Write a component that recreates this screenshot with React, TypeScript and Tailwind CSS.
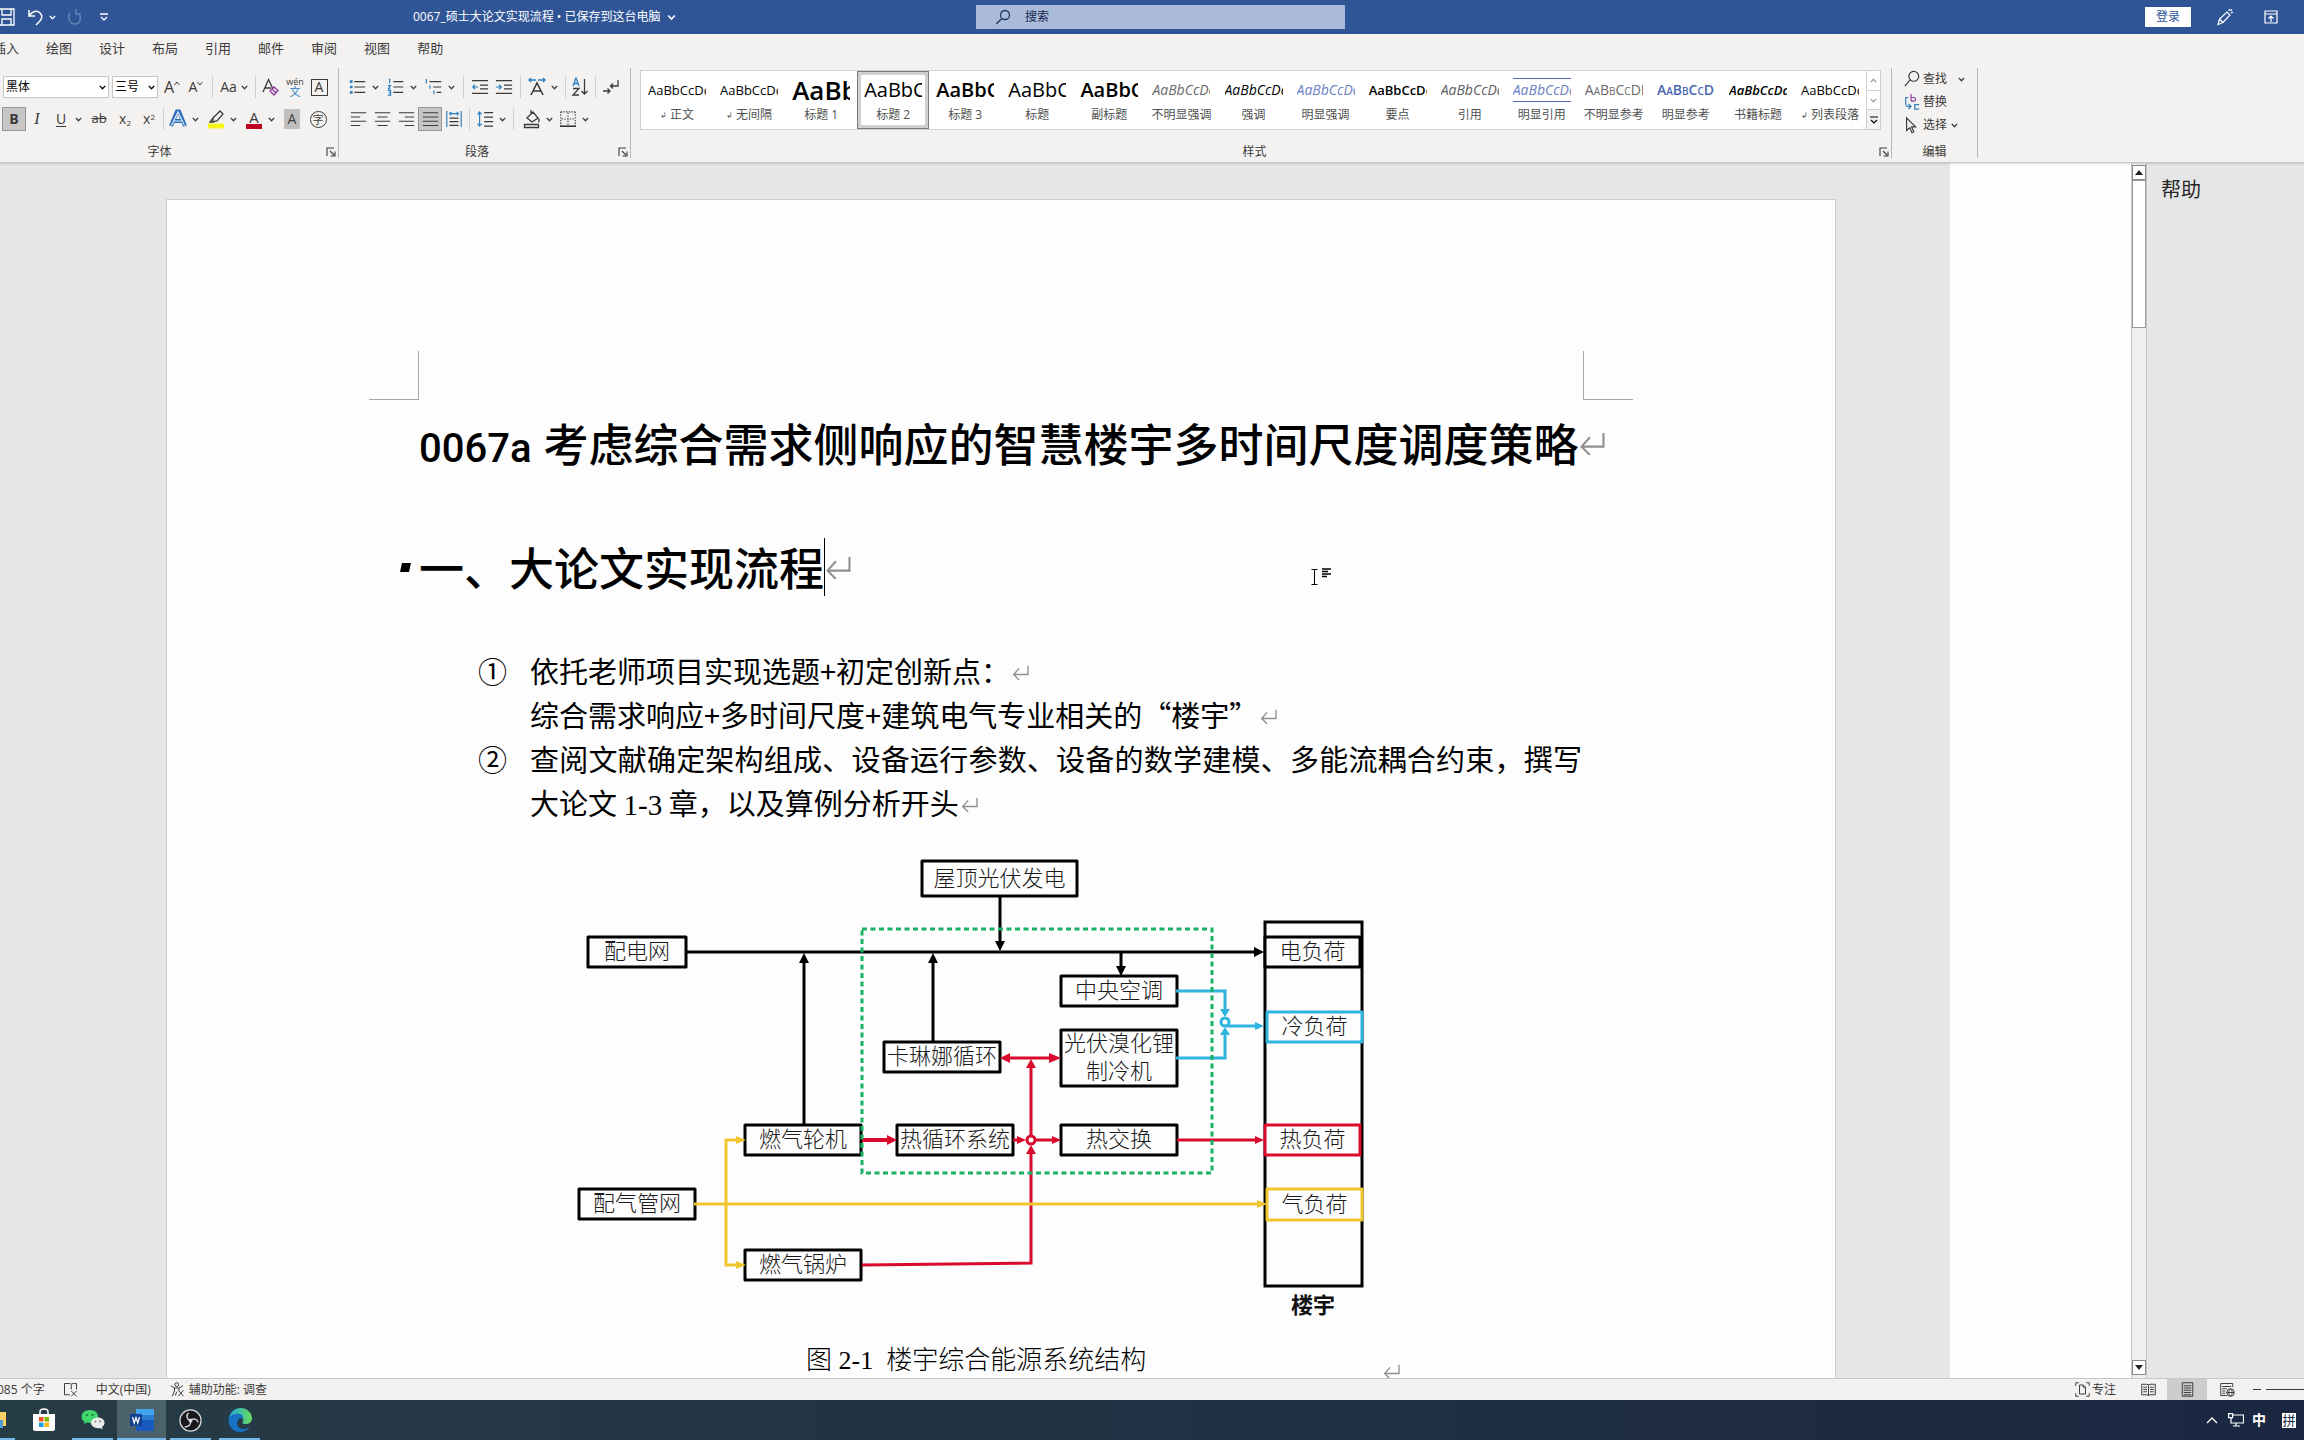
import React, { ReactNode } from "react";

const UI_FONT = "font-['Open_Sans','Noto_Sans_CJK_SC',sans-serif]";

/* ---------- shared pieces ---------- */

function Chevron({ className = "" }: { className?: string }) {
  return (
    <svg viewBox="0 0 10 10" className={"size-[9px] shrink-0 " + className} fill="none" stroke="currentColor" strokeWidth="1.5">
      <path d="M2 3.2 5 6.4 8 3.2" />
    </svg>
  );
}

function Icon({ children, box = "0 0 20 20", className = "size-5" }: { children: ReactNode; box?: string; className?: string }) {
  return (
    <svg viewBox={box} className={"shrink-0 " + className} fill="none" stroke="#3b3a39" strokeWidth="1.3">
      {children}
    </svg>
  );
}

function Tool({ label, children, active = false, wide = false }: { label: string; children: ReactNode; active?: boolean; wide?: boolean }) {
  return (
    <button
      type="button"
      aria-label={label}
      className={
        "flex h-[22px] shrink-0 items-center justify-center " +
        (wide ? "w-7 " : active ? "w-[22px] " : "w-6 ") +
        (active ? "bg-[#c8c6c4] outline outline-1 outline-[#979593]" : "")
      }
    >
      {children}
    </button>
  );
}

function SplitTool({ label, children }: { label: string; children: ReactNode }) {
  return (
    <button type="button" aria-label={label} className="flex h-[22px] w-9 shrink-0 items-center text-[#3b3a39]">
      <span className="flex w-6 items-center justify-center">{children}</span>
      <Chevron className="ml-px" />
    </button>
  );
}

function Sep({ className = "mx-1" }: { className?: string }) {
  return <span className={"h-[22px] w-px shrink-0 bg-[#d2d0ce] " + className} />;
}

function Launcher() {
  return (
    <button type="button" aria-label="更多选项" className="mr-[2px] size-[10px]">
      <svg viewBox="0 0 10 10" fill="none" stroke="#3b3a39" strokeWidth="1.1" className="size-[10px]">
        <path d="M1 9V1h7M4 4l4 4M9 4.500V9H4.500" />
      </svg>
    </button>
  );
}

function GroupLabel({ text, launcher = true }: { text: string; launcher?: boolean }) {
  return (
    <div className="flex h-[14px] items-center text-xs text-[#3b3a39]">
      <span className={"flex-1 text-center " + (launcher ? "pr-[10px]" : "")}>{text}</span>
      {launcher && <Launcher />}
    </div>
  );
}

function Picker({ label, value, options, className }: { label: string; value: string; options: string[]; className: string }) {
  return (
    <label className={"relative flex h-[22px] shrink-0 items-center border border-[#c8c6c4] bg-white " + className}>
      <span className="sr-only">{label}</span>
      <select defaultValue={value} className="w-full appearance-none bg-transparent pl-[2px] text-xs text-black">
        {options.map((o) => (
          <option key={o}>{o}</option>
        ))}
      </select>
      <Chevron className="pointer-events-none absolute right-px" />
    </label>
  );
}

function Mark({ big = false }: { big?: boolean }) {
  return (
    <svg
      viewBox="0 0 24 22"
      className={"inline-block shrink-0 self-center align-[3px] " + (big ? "h-[23px] w-[26px]" : "ml-[2px] h-[15px] w-[17px]")}
      fill="none"
      stroke="#8f8f8f"
      strokeWidth="2"
    >
      <path d="M23 1v13H2M10 5 2 14l8 8" />
    </svg>
  );
}

/* ---------- title bar ---------- */

function TitleBar() {
  return (
    <header className="relative flex h-[34px] shrink-0 items-center bg-[#2f5597] text-xs text-white">
      <button type="button" aria-label="保存" className="-ml-[3px]">
        <svg viewBox="0 0 18 18" className="size-[18px]" fill="none" stroke="#fff" strokeWidth="1.3">
          <path d="M1 1h16v16H3l-2-2zM5 1v6h9V1M5 17v-6h9v6" />
        </svg>
      </button>
      <button type="button" aria-label="撤消" className="ml-3 flex items-center">
        <svg viewBox="0 0 17 18" className="h-[18px] w-[17px]" fill="none" stroke="#fff" strokeWidth="1.5">
          <path d="M2 2v6h6M2 8c3-5 8-6 11-3s2 6-1 9l-3 3" />
        </svg>
        <Chevron className="ml-1" />
      </button>
      <button type="button" aria-label="恢复" className="ml-[9px] opacity-25">
        <svg viewBox="0 0 17 18" className="h-[18px] w-[17px]" fill="none" stroke="#fff" strokeWidth="1.5">
          <path d="M10 1v5h5M13 6c3 4 1 10-4 10S1 10 4 5" />
        </svg>
      </button>
      <button type="button" aria-label="自定义快速访问工具栏" className="ml-4">
        <svg viewBox="0 0 10 10" className="size-[10px]" fill="none" stroke="#fff" strokeWidth="1.3">
          <path d="M1 2h8M2 5l3 3 3-3" />
        </svg>
      </button>
      <button type="button" className="ml-[304px] flex items-center whitespace-nowrap">
        0067_硕士大论文实现流程 • 已保存到这台电脑
        <Chevron className="ml-[6px] size-[11px]" />
      </button>
      <label className="absolute left-[42.360%] top-[5px] flex h-6 w-[16%] items-center bg-[#a9bbd9] pl-[19px]">
        <svg viewBox="0 0 16 16" className="size-4" fill="none" stroke="#1f3864" strokeWidth="1.3">
          <circle cx="10" cy="6" r="4.500" />
          <path d="m6.800 9.500-5.500 5.500" />
        </svg>
        <input aria-label="搜索" placeholder="搜索" className="ml-[14px] min-w-0 flex-1 bg-transparent text-xs outline-none placeholder:text-[#16294d]" />
      </label>
      <div className="ml-auto flex items-center pr-[26px]">
        <button type="button" className="h-5 w-[46px] bg-white text-xs text-[#2f5597]">
          登录
        </button>
        <button type="button" aria-label="墨迹" className="ml-[25px]">
          <svg viewBox="0 0 18 18" className="size-[18px]" fill="none" stroke="#fff" strokeWidth="1.200">
            <path d="M2 16.500 3.500 11 11 4l3 3-7 7.500zM3.500 11l3.500 3.500M12.500 3 14 1M15 5l2-1M14.500 3l1.500-1.500" />
          </svg>
        </button>
        <button type="button" aria-label="功能区显示选项" className="ml-[30px]">
          <svg viewBox="0 0 14 14" className="size-[14px]" fill="none" stroke="#fff" strokeWidth="1.200">
            <path d="M1 1h12v12H1zM1 4h12M7 12V6M4.500 8.500 7 6l2.500 2.500" />
          </svg>
        </button>
      </div>
    </header>
  );
}

/* ---------- ribbon ---------- */

const TABS = ["插入", "绘图", "设计", "布局", "引用", "邮件", "审阅", "视图", "帮助"];

function TabRow() {
  return (
    <nav className="-ml-[7px] flex h-[30px] items-center gap-[27px] text-[13px] text-[#3b3a39]">
      {TABS.map((t) => (
        <button key={t} type="button" className="whitespace-nowrap">
          {t}
        </button>
      ))}
    </nav>
  );
}

function FontGroup() {
  return (
    <section className="flex w-[339px] shrink-0 flex-col border-r border-[#b8b6b4] pl-[3px] pt-2">
      <div className="flex items-center">
        <Picker label="字体" value="黑体" options={["黑体", "宋体"]} className="w-[106px]" />
        <Picker label="字号" value="三号" options={["三号", "四号"]} className="ml-[3px] mr-[2px] w-[46px]" />
        <Tool label="增大字号">
          <span className="text-base text-[#3b3a39]">A</span>
          <svg viewBox="0 0 6 5" className="mb-2 h-[5px] w-[6px]" fill="none" stroke="#3b3a39"><path d="M.5 4 3 1l2.500 3" /></svg>
        </Tool>
        <Tool label="减小字号">
          <span className="text-sm text-[#3b3a39]">A</span>
          <svg viewBox="0 0 6 5" className="mb-2 h-[5px] w-[6px]" fill="none" stroke="#3b3a39"><path d="M.5 1 3 4l2.500-3" /></svg>
        </Tool>
        <Sep />
        <button type="button" aria-label="更改大小写" className="flex h-[22px] w-[35px] items-center justify-center gap-[3px] text-sm text-[#3b3a39]">
          Aa
          <Chevron />
        </button>
        <Sep className="mx-[3px]" />
        <Tool label="清除所有格式">
          <Icon>
            <path d="M2 15 7.500 2.500 12 12M4 11h6" />
            <path d="m9 14 4-4 4 3.500-4 4.500zM11 12l4 4" stroke="#8a3a9a" />
          </Icon>
        </Tool>
        <Tool label="拼音指南">
          <span className="flex flex-col items-center text-[9px] leading-[9px] text-[#3b3a39]">
            wén<span className="text-[11px] leading-[11px] text-[#2b7fc0]">文</span>
          </span>
        </Tool>
        <Tool label="字符边框">
          <span className="flex size-[17px] items-center justify-center border border-[#3b3a39] text-sm leading-none text-[#3b3a39]">A</span>
        </Tool>
      </div>
      <div className="mt-[10px] flex items-center text-[#3b3a39]">
        <Tool label="加粗" active>
          <b className="text-sm">B</b>
        </Tool>
        <Tool label="倾斜">
          <i className="font-['Liberation_Serif',serif] text-base">I</i>
        </Tool>
        <SplitTool label="下划线">
          <span className="text-sm underline underline-offset-2">U</span>
        </SplitTool>
        <Tool label="删除线" wide>
          <s className="text-[13px]">ab</s>
        </Tool>
        <Tool label="下标">
          <span className="text-sm">
            x<sub className="text-[8px]">2</sub>
          </span>
        </Tool>
        <Tool label="上标">
          <span className="text-sm">
            x<sup className="text-[8px]">2</sup>
          </span>
        </Tool>
        <Sep className="mx-[2px]" />
        <div className="flex items-center gap-[2px]">
          <SplitTool label="文本效果">
            <Icon>
              <path d="M3 17 9 2.500h2L17 17M6 12h8" stroke="#2b6cb8" strokeWidth="4" />
              <path d="M3.500 16.500 10 3l6.500 13.500M6 12h8" stroke="#dcebfa" strokeWidth="1.200" />
            </Icon>
          </SplitTool>
          <SplitTool label="突出显示">
            <Icon>
              <path d="m7 9 7-7 3 3-6 7-4 1zM7 9v4l-3 0z" />
              <path d="M2 17h16" stroke="#f7f71c" strokeWidth="5" />
            </Icon>
          </SplitTool>
          <SplitTool label="字体颜色">
            <span className="flex flex-col items-center text-[15px] leading-[14px]">
              A<span className="h-[5px] w-4 bg-[#c00020]" />
            </span>
          </SplitTool>
          <Tool label="字符底纹">
            <span className="flex h-5 w-4 items-center justify-center bg-[#c0bfbe] text-sm leading-none">A</span>
          </Tool>
          <Tool label="带圈字符">
            <span className="flex size-[17px] items-center justify-center rounded-full border border-[#3b3a39] text-[11px] leading-none">字</span>
          </Tool>
        </div>
      </div>
      <div className="mt-[15px]">
        <GroupLabel text="字体" />
      </div>
    </section>
  );
}

function ParagraphGroup() {
  return (
    <section className="flex w-[292px] shrink-0 flex-col border-r border-[#b8b6b4] pl-[7px] pt-2">
      <div className="flex items-center">
        <div className="flex gap-[2px]">
          <SplitTool label="项目符号">
            <Icon className="size-[18px]">
              <path d="M6 4h12M6 10h12M6 16h12" />
              <path d="M1 4h3M1 10h3M1 16h3" stroke="#2b7fc0" strokeWidth="3" />
            </Icon>
          </SplitTool>
          <SplitTool label="编号">
            <Icon className="size-[18px]">
              <path d="M7 4h11M7 10h11M7 16h11" />
              <path d="M2 1.500h1V6M1 8.500h3L1.500 12H4M1 14h3v5H1M2 16.500h2" stroke="#2b7fc0" />
            </Icon>
          </SplitTool>
          <SplitTool label="多级列表">
            <Icon className="size-[18px]">
              <path d="M5 4h13M9 10h9M13 16h5" />
              <path d="M1.500 1v5M5.500 8v4M10 14v4" stroke="#2b7fc0" />
            </Icon>
          </SplitTool>
        </div>
        <Sep className="ml-[5px] mr-1" />
        <Tool label="减少缩进量">
          <Icon className="size-[18px]">
            <path d="M1 3h18M10 8h9M10 12h9M1 17h18" />
            <path d="M8 10H2M4.500 7.500 2 10l2.500 2.500" stroke="#2b7fc0" />
          </Icon>
        </Tool>
        <Tool label="增加缩进量">
          <Icon className="size-[18px]">
            <path d="M1 3h18M10 8h9M10 12h9M1 17h18" />
            <path d="M1 10h6M4.500 7.500 7 10l-2.500 2.500" stroke="#2b7fc0" />
          </Icon>
        </Tool>
        <Sep />
        <SplitTool label="中文版式">
          <Icon>
            <path d="M4 18 10 6l6 12M6 14h8" strokeWidth="1.600" />
            <path d="M9 3H2M4 1 2 3l2 2M11 3h7M16 1l2 2-2 2" stroke="#2b7fc0" />
          </Icon>
        </SplitTool>
        <Sep className="ml-1 mr-[2px]" />
        <Tool label="排序">
          <Icon>
            <path d="M3 9 6 1l3 8M4 6.500h4" stroke="#2b7fc0" />
            <path d="M3 11.500h6L3 18h6M14.500 2v15M11.500 14l3 3 3-3" />
          </Icon>
        </Tool>
        <Sep className="mx-[3px]" />
        <Tool label="显示编辑标记">
          <Icon>
            <path d="M17 3v6h-7M12 6.500 9.500 9l2.500 2.500M2 14h7M6.500 11.500 9 14l-2.500 2.500" />
          </Icon>
        </Tool>
      </div>
      <div className="mt-[10px] flex items-center">
        <Tool label="左对齐">
          <Icon className="size-[17px]"><path d="M1 2h18M1 7h11M1 12h18M1 17h11" /></Icon>
        </Tool>
        <Tool label="居中">
          <Icon className="size-[17px]"><path d="M1 2h18M4 7h12M1 12h18M4 17h12" /></Icon>
        </Tool>
        <Tool label="右对齐">
          <Icon className="size-[17px]"><path d="M1 2h18M8 7h11M1 12h18M8 17h11" /></Icon>
        </Tool>
        <span className="mx-px">
          <Tool label="两端对齐" active>
            <Icon className="size-[17px]"><path d="M1 2h18M1 7h18M1 12h18M1 17h18" /></Icon>
          </Tool>
        </span>
        <Tool label="分散对齐">
          <Icon className="size-[18px]">
            <path d="M5 9h10M5 13h10M5 17h10" />
            <path d="M2 1v18M18 1v18M5 4h10M7 2 5 4l2 2M13 2l2 2-2 2" stroke="#2b7fc0" />
          </Icon>
        </Tool>
        <Sep className="mx-[3px]" />
        <SplitTool label="行距">
          <Icon className="size-[18px]">
            <path d="M9 3h10M9 8h10M9 13h10M9 18h10" />
            <path d="M4 2v16M1.500 5 4 2l2.500 3M1.500 15 4 18l2.500-3" stroke="#2b7fc0" />
          </Icon>
        </SplitTool>
        <Sep className="ml-1 mr-[6px]" />
        <SplitTool label="底纹">
          <Icon>
            <path d="m5 9 6-6 5 6-6 4zM9 5V1M16 9c2 2 1 4 0 4" />
            <path d="M2.500 15.500h14v3h-14z" />
          </Icon>
        </SplitTool>
        <SplitTool label="边框">
          <Icon className="size-[18px]">
            <path d="M2 2h16M2 2v16M18 2v16M10 3v14M3 10h14" strokeDasharray="1.500 1.500" />
            <path d="M1 18h18" strokeWidth="1.800" />
          </Icon>
        </SplitTool>
      </div>
      <div className="mt-[15px]">
        <GroupLabel text="段落" />
      </div>
    </section>
  );
}

type StyleItem = { name: string; look: string; sample?: string; mark?: boolean; selected?: boolean };

const STYLES: StyleItem[] = [
  { name: "正文", look: "text-[13px] text-black", mark: true },
  { name: "无间隔", look: "text-[13px] text-black", mark: true },
  { name: "标题 1", look: "text-[26px] font-semibold text-black" },
  { name: "标题 2", look: "text-[20px] text-black", selected: true },
  { name: "标题 3", look: "text-[20px] font-semibold text-black" },
  { name: "标题", look: "text-[20px] text-black" },
  { name: "副标题", look: "text-[20px] font-semibold text-black" },
  { name: "不明显强调", look: "text-sm italic text-[#6a6a6a]" },
  { name: "强调", look: "text-sm italic text-black" },
  { name: "明显强调", look: "text-sm italic text-[#6b82c4]" },
  { name: "要点", look: "text-[13px] font-semibold text-black" },
  { name: "引用", look: "text-sm italic text-[#606060]" },
  { name: "明显引用", look: "text-sm italic text-[#6b82c4] border-y border-[#4f6bb5]" },
  { name: "不明显参考", look: "text-sm text-[#6a6a6a]", sample: "smallcaps" },
  { name: "明显参考", look: "text-sm font-semibold text-[#4a68b0]", sample: "smallcaps" },
  { name: "书籍标题", look: "text-[13px] font-semibold italic text-black" },
  { name: "列表段落", look: "text-[13px] text-black", mark: true },
];

function Sample({ item }: { item: StyleItem }) {
  if (item.sample !== "smallcaps") return <>AaBbCcDd</>;
  return (
    <>
      A<span className="text-[10px]">A</span>B<span className="text-[10px]">B</span>C<span className="text-[10px]">C</span>DD
    </>
  );
}

function StylesGroup() {
  return (
    <section className="flex min-w-0 flex-1 flex-col border-r border-[#b8b6b4] pl-[9px] pt-[2px]">
      <div className="mr-[10px] flex h-[60px] border border-[#d2d0ce] bg-white">
        <div className="flex flex-1 justify-between overflow-hidden">
          {STYLES.map((s) => (
            <button
              key={s.name}
              type="button"
              className={
                "flex h-[58px] w-[72px] shrink-0 flex-col items-center " +
                (s.selected ? "bg-white shadow-[inset_0_0_0_1px_#7a7977,inset_0_0_0_4px_#d2d0ce]" : "")
              }
            >
              <span className="flex h-[38px] w-[58px] items-center overflow-hidden">
                <span className={"whitespace-nowrap leading-[22px] " + s.look}>
                  <Sample item={s} />
                </span>
              </span>
              <span className="flex h-3 items-center whitespace-nowrap text-xs leading-3 text-[#505050]">
                {s.mark && <span className="mr-[3px] text-[8px]">↲</span>}
                {s.name}
              </span>
            </button>
          ))}
        </div>
        <div className="flex w-[14px] shrink-0 flex-col border-l border-[#d2d0ce] text-[#a19f9d]">
          <button type="button" aria-label="上一行" className="flex flex-1 items-center justify-center border-b border-[#d2d0ce]">
            <Chevron className="rotate-180" />
          </button>
          <button type="button" aria-label="下一行" className="flex flex-1 items-center justify-center border-b border-[#d2d0ce]">
            <Chevron />
          </button>
          <button type="button" aria-label="其他样式" className="flex flex-1 items-center justify-center bg-[#f3f2f1] text-black">
            <svg viewBox="0 0 10 10" className="size-[10px]" fill="none" stroke="currentColor" strokeWidth="1.2">
              <path d="M1 2h8M2 5l3 3 3-3" />
            </svg>
          </button>
        </div>
      </div>
      <div className="mt-[15px]">
        <GroupLabel text="样式" />
      </div>
    </section>
  );
}

function EditGroup() {
  return (
    <section className="flex w-[86px] shrink-0 flex-col border-r border-[#b8b6b4] text-xs text-[#3b3a39]">
      <div className="flex flex-col gap-px pl-[11px]">
        <button type="button" className="flex h-[22px] items-center gap-[2px]">
          <Icon className="size-[18px]"><circle cx="12" cy="7" r="5.500" /><path d="m8 11-6 7" /></Icon>
          查找
          <Chevron className="ml-2" />
        </button>
        <button type="button" className="flex h-[22px] items-center gap-[2px]">
          <Icon className="size-[18px]">
            <path d="M9 1v8M9 5h3a2 2 0 0 1 0 4H9" stroke="#8a3a9a" />
            <path d="M6 5H3v7c0 3 2 3 5 3M6 12l3 3-3 3M18 13h-5v5h5" stroke="#2b7fc0" />
          </Icon>
          替换
        </button>
        <button type="button" className="flex h-[22px] items-center gap-[2px]">
          <Icon className="size-[18px]"><path d="M4 2v14l3.500-3 2.500 5.500 2-1-2.500-5.500H14z" /></Icon>
          选择
          <Chevron className="ml-px" />
        </button>
      </div>
      <div className="mt-[9px]">
        <GroupLabel text="编辑" launcher={false} />
      </div>
    </section>
  );
}

function Ribbon() {
  return (
    <div className="z-10 shrink-0 border-b border-[#c8c6c4] bg-[#f3f2f1] shadow-sm">
      <TabRow />
      <div className="flex h-[98px] pb-1 pr-[326px] pt-1">
        <FontGroup />
        <ParagraphGroup />
        <StylesGroup />
        <EditGroup />
      </div>
    </div>
  );
}

/* ---------- energy system diagram ---------- */

const RED = "#d90a2c";
const BLUE = "#2fb3df";
const GOLD = "#f0c62f";
const GREEN = "#17b263";

type Node = { lines: string[]; x: number; y: number; w: number; h: number; color?: string };

const NODES: Node[] = [
  { lines: ["屋顶光伏发电"], x: 922, y: 861, w: 155, h: 35 },
  { lines: ["配电网"], x: 588, y: 937, w: 98, h: 30 },
  { lines: ["卡琳娜循环"], x: 884, y: 1042, w: 116, h: 30 },
  { lines: ["中央空调"], x: 1061, y: 976, w: 116, h: 30 },
  { lines: ["光伏溴化锂", "制冷机"], x: 1061, y: 1030, w: 116, h: 56 },
  { lines: ["燃气轮机"], x: 745, y: 1125, w: 116, h: 30 },
  { lines: ["热循环系统"], x: 897, y: 1125, w: 116, h: 30 },
  { lines: ["热交换"], x: 1061, y: 1125, w: 116, h: 30 },
  { lines: ["配气管网"], x: 579, y: 1189, w: 116, h: 30 },
  { lines: ["燃气锅炉"], x: 745, y: 1250, w: 116, h: 30 },
  { lines: ["电负荷"], x: 1265, y: 937, w: 95, h: 30 },
  { lines: ["冷负荷"], x: 1267, y: 1012, w: 95, h: 30, color: BLUE },
  { lines: ["热负荷"], x: 1265, y: 1125, w: 95, h: 30, color: RED },
  { lines: ["气负荷"], x: 1267, y: 1189, w: 95, h: 31, color: GOLD },
];

function Diagram() {
  return (
    <svg
      viewBox="560 850 840 470"
      className="ml-[141px] mt-[26px] block h-[470px] w-[840px] font-['Noto_Sans_CJK_SC',sans-serif] font-light"
      fill="none"
      strokeWidth="3"
      role="img"
      aria-label="楼宇综合能源系统结构"
    >
      <rect x="1265" y="922" width="97" height="364" stroke="#000" />
      {NODES.map((n) => (
        <g key={n.lines[0]}>
          <rect x={n.x} y={n.y} width={n.w} height={n.h} fill="#fdfdfd" stroke={n.color ?? "#000"} strokeLinejoin="round" />
          {n.lines.map((t, i) => (
            <text
              key={t}
              x={n.x + n.w / 2}
              y={n.y + n.h / 2 + 7 + (i - (n.lines.length - 1) / 2) * 28}
              fontSize="22"
              textAnchor="middle"
              fill="#1a1a1a"
              stroke="none"
            >
              {t}
            </text>
          ))}
        </g>
      ))}

      <g stroke="#000">
        <path d="M687 952H1258M804 1124V960M933 1041V960M1000 897V942M1121 952V968" />
        <path
          d="M1264 952l-10-5v10zM804 953l-5 10h10zM933 953l-5 10h10zM1000 951l-5-10h10zM1121 976l-5-10h10z"
          fill="#000"
          stroke="none"
        />
      </g>

      <g stroke={RED}>
        <path d="M862 1140H892" strokeWidth="4" />
        <path d="M1013 1140H1020M1035 1140H1056M1177 1140H1258M1008 1058H1052M1031 1135V1064M862 1265L1031 1263V1150" />
        <circle cx="1031" cy="1140" r="4" />
        <path
          d="M897 1140l-10-5v10zM1026 1140l-9-4v8zM1061 1140l-9-4v8zM1264 1140l-9-4v8zM1000 1058l10-5v10zM1061 1058l-12-5v10zM1031 1059l-5 9h10zM1031 1145l-5 9h10z"
          fill={RED}
          stroke="none"
        />
      </g>

      <g stroke={BLUE}>
        <path d="M1176 991H1225V1010M1176 1058H1225V1034M1227 1026H1258" />
        <circle cx="1225" cy="1022" r="4" />
        <path d="M1225 1017l-5-8h10zM1225 1027l-5 8h10zM1264 1026l-9-4v8z" fill={BLUE} stroke="none" />
      </g>

      <g stroke={GOLD}>
        <path d="M694 1204H1260M740 1140H726V1265H740" />
        <path d="M746 1140l-10-4v8zM746 1265l-10-4v8zM1267 1204l-10-4v8z" fill={GOLD} stroke="none" />
      </g>

      <rect x="862" y="929" width="350" height="244" stroke={GREEN} strokeDasharray="5 3.500" />
      <text x="1313" y="1313" fontSize="22" fontWeight="700" textAnchor="middle" fill="#111" stroke="none">
        楼宇
      </text>
    </svg>
  );
}

/* ---------- document ---------- */

function Page() {
  return (
    <article className="relative ml-[166px] mr-[114px] mt-[36px] h-[1300px] border border-[#cfcfcf] bg-[#fdfdfd] pt-[151px] text-black">
      <div className="flex justify-between px-[202px]">
        <span className="h-[49px] w-[50px] border-b border-r border-[#a6a6a6]" />
        <span className="h-[49px] w-[50px] border-b border-l border-[#a6a6a6]" />
      </div>

      <div className="pl-[252px] pr-[250px] font-['Noto_Sans_CJK_SC',sans-serif]">
        <h1 className="mt-[13px] flex h-[60px] items-baseline whitespace-nowrap text-[45px] font-medium leading-[60px]">
          <span className="mr-3 font-['Roboto',sans-serif] text-[40px] leading-none">0067a</span>
          考虑综合需求侧响应的智慧楼宇多时间尺度调度策略
          <Mark big />
        </h1>

        <h2 className="mt-16 flex h-[60px] items-center whitespace-nowrap text-[45px] font-medium leading-[60px]">
          <span className="-ml-[18px] mr-[9px] size-[9px] -skew-x-12 bg-black" />
          一、大论文实现流程
          <span className="h-[58px] w-px bg-black" />
          <Mark big />
        </h2>

        <ol className="mt-[51px] pl-[59px] pr-[3px] text-justify text-[29px] leading-[44px]">
          <li className="grid grid-cols-[52px_1fr]">
            <span>①</span>
            <p>
              依托老师项目实现选题+初定创新点：
              <Mark />
              <br />
              综合需求响应+多时间尺度+建筑电气专业相关的“楼宇”
              <Mark />
            </p>
          </li>
          <li className="grid grid-cols-[52px_1fr]">
            <span>②</span>
            <p>
              查阅文献确定架构组成、设备运行参数、设备的数学建模、多能流耦合约束，撰写大论文{" "}
              <span className="font-['Liberation_Serif',serif] leading-none">1-3</span> 章，以及算例分析开头
              <Mark />
            </p>
          </li>
        </ol>

        <Diagram />

        <p className="mt-[21px] flex h-10 items-center pl-[387px] text-[26px] font-light leading-10">
          <span className="w-[575px] whitespace-pre font-['Liberation_Serif','Noto_Sans_CJK_SC',serif]">图 2-1  楼宇综合能源系统结构</span>
          <span className="mt-5 flex">
            <Mark />
          </span>
        </p>
      </div>

      <svg viewBox="0 0 20 18" className="absolute left-[1144px] top-[368px] h-[18px] w-5" fill="none" stroke="#000" strokeWidth="1">
        <path d="M.5 1.500h6M.5 16.500h6M3.500 1.500v15" />
        <path d="M11 1h9M11 3.500h6M11 6h9M11 8.500h5" strokeWidth="1.300" />
      </svg>
    </article>
  );
}

function ScrollBar() {
  return (
    <div className="flex w-4 shrink-0 flex-col border-x border-[#c4c4c4] bg-[#f0f0f0] pb-[3px] pt-[2px]">
      <button type="button" aria-label="向上滚动" className="flex h-[15px] items-center justify-center border border-[#8a8a8a] bg-white">
        <svg viewBox="0 0 8 5" className="h-[5px] w-2"><path d="M0 5 4 0l4 5z" fill="#222" /></svg>
      </button>
      <span className="h-[148px] border border-[#9a9a9a] bg-white" />
      <button type="button" aria-label="向下滚动" className="mt-auto flex h-[15px] items-center justify-center border border-[#8a8a8a] bg-white">
        <svg viewBox="0 0 8 5" className="h-[5px] w-2"><path d="M0 0h8L4 5z" fill="#222" /></svg>
      </button>
    </div>
  );
}

/* ---------- status bar ---------- */

function StatusBar() {
  return (
    <footer className="flex h-[22px] shrink-0 items-center border-t border-[#c8c6c4] bg-[#f3f2f1] text-xs text-[#3b3a39]">
      <span className="-ml-[3px] whitespace-nowrap">085 个字</span>
      <button type="button" aria-label="校对" className="ml-[18px]">
        <Icon className="size-[15px]">
          <path d="M9 17H2V2h7c2 0 2 2 2 3v5M11 3c1-1 3-1 7-1v8M11 12l7 7M18 12l-7 7" />
        </Icon>
      </button>
      <button type="button" className="ml-[18px] whitespace-nowrap">中文(中国)</button>
      <button type="button" className="ml-[19px] flex items-center gap-1 whitespace-nowrap">
        <Icon className="size-[15px]">
          <circle cx="9" cy="3.500" r="2.500" />
          <path d="M1 5l5 3v4l-3 7M17 5l-5 3v3M6 8h6M7 18l2-5M11 11l7 8M18 11l-7 8" />
        </Icon>
        辅助功能: 调查
      </button>
      <div className="ml-auto flex h-full items-center">
        <button type="button" className="mr-[17px] flex items-center gap-[2px]">
          <Icon className="size-[15px]">
            <path d="M1 5V1h4M15 1h4v4M1 15v4h4M19 15v4h-4M6 4h5l3 3v9H6zM11 4v3h3" />
          </Icon>
          专注
        </button>
        <button type="button" aria-label="阅读视图" className="mr-1 flex h-full w-[30px] items-center justify-center">
          <Icon className="size-[15px]">
            <path d="M1 3h7l2 1 2-1h7v14h-7l-2 1-2-1H1zM10 4v14M3 7h5M3 10h5M3 13h5M12 7h5M12 10h5M12 13h5" />
          </Icon>
        </button>
        <button type="button" aria-label="页面视图" className="flex h-full w-10 items-center justify-center bg-[#cfcdcb]">
          <Icon className="size-[15px]">
            <path d="M3 1h14v18H3zM5 5h10M5 8h10M5 11h10M5 14h10M5 17h10" />
          </Icon>
        </button>
        <button type="button" aria-label="Web 版式视图" className="flex h-full w-10 items-center justify-center">
          <Icon className="size-[15px]">
            <path d="M9 18H1V2h16v5M3 6h12M3 9h6M3 12h4M3 15h4" />
            <circle cx="14" cy="14" r="5" />
            <path d="M9 14h10M14 9c-3 3-3 7 0 10M14 9c3 3 3 7 0 10" />
          </Icon>
        </button>
        <button type="button" aria-label="缩小" className="ml-[6px] h-px w-2 bg-[#3b3a39]" />
        <span className="ml-[5px] h-px w-[38px] bg-[#3b3a39]" />
      </div>
    </footer>
  );
}

/* ---------- task bar ---------- */

function TaskItem({ label, children, running = true, current = false }: { label: string; children: ReactNode; running?: boolean; current?: boolean }) {
  return (
    <button type="button" aria-label={label} className={"relative flex h-full w-[49px] shrink-0 items-center justify-center " + (current ? "bg-[#4c626b]" : "")}>
      {children}
      {running && <span className={"absolute bottom-0 h-[2px] bg-[#76b9ed] " + (current ? "inset-x-0" : "inset-x-[4px]")} />}
    </button>
  );
}

function TaskBar() {
  return (
    <footer className="flex h-10 shrink-0 items-center bg-linear-to-r from-[#263c45] to-[#1b2741] text-white">
      <button type="button" aria-label="文件资源管理器" className="relative flex h-full w-[19px] items-center">
        <svg viewBox="0 0 6 18" className="h-[18px] w-[6px]">
          <path d="M0 1h6v14H0z" fill="#f7cf62" />
          <path d="M0 9h3v8H0z" fill="#4b9cd8" />
        </svg>
        <span className="absolute bottom-0 left-0 h-[2px] w-[15px] bg-[#76b9ed]" />
      </button>
      <TaskItem label="Microsoft Store" running={false}>
        <svg viewBox="0 0 24 24" className="size-6">
          <path d="M8 7V4c0-4 8-4 8 0v3" fill="none" stroke="#fff" strokeWidth="1.500" />
          <path d="M1 6h22v15q0 2-2 2H3q-2 0-2-2z" fill="#fff" />
          <path d="M7 9h4.500v4.500H7z" fill="#f04e23" />
          <path d="M12.500 9H17v4.500h-4.500z" fill="#7db700" />
          <path d="M7 14.500h4.500V19H7z" fill="#1f9fe0" />
          <path d="M12.500 14.500H17V19h-4.500z" fill="#fdb813" />
        </svg>
      </TaskItem>
      <TaskItem label="微信">
        <svg viewBox="0 0 24 22" className="h-[22px] w-6">
          <path d="M8.500 1C4 1 .5 4 .5 7.500c0 2 1 4 3 5.200L3 15l3-1.500c6 1.500 11-1.500 11-6S13 1 8.500 1z" fill="#3fd66b" />
          <circle cx="6" cy="6" r="1" fill="#1d6b36" />
          <circle cx="11.500" cy="6" r="1" fill="#1d6b36" />
          <path d="M17 8.500c-4 0-7 2.500-7 5.500s4 6 9 5l2.500 1.500-.5-2.500c5-3.500 2-9.500-4-9.500z" fill="#eceeed" />
          <circle cx="14.500" cy="12.500" r=".9" fill="#777" />
          <circle cx="19" cy="12.500" r=".9" fill="#777" />
        </svg>
      </TaskItem>
      <TaskItem label="Word" current>
        <svg viewBox="0 0 24 22" className="h-[22px] w-6">
          <rect x="6" y="0" width="18" height="22" rx="1.500" fill="#2b7cd3" />
          <path d="M6 0h18v6H6z" fill="#41a5ee" />
          <path d="M6 11h18v11H6z" fill="#185abd" />
          <rect x="0" y="5" width="12" height="12" rx="1" fill="#103f91" />
          <path d="m2.500 8 1.700 6L6 8.500 7.800 14l1.700-6" fill="none" stroke="#fff" strokeWidth="1.300" />
        </svg>
      </TaskItem>
      <TaskItem label="OBS">
        <svg viewBox="0 0 24 24" className="size-[23px]">
          <circle cx="12" cy="12" r="11" fill="#16181b" stroke="#d8d8d8" strokeWidth="1.300" />
          <g fill="none" stroke="#d8d8d8" strokeWidth="1.500">
            <path d="M12 12c-4-1-5-5-2-8M12 12c3-3 7-1.500 8 2M12 12c1 4-2 7-6 6.500" />
          </g>
          <circle cx="12" cy="12" r="2" fill="#d8d8d8" />
        </svg>
      </TaskItem>
      <TaskItem label="Microsoft Edge">
        <svg viewBox="0 0 24 24" className="size-6">
          <defs>
            <linearGradient id="edgeTop" x1="0" x2="1">
              <stop offset="0" stopColor="#1ca7e0" />
              <stop offset="1" stopColor="#6bdc5a" />
            </linearGradient>
          </defs>
          <path d="M1 10C2 4 7 0 12.500 0 19 0 24 5 24 10c0 4-3 6-6 6-4 0-4-1.500-3-3 1-3-1-5-4-5-5 0-9 4-8 9C1 15 .5 12 1 10z" fill="url(#edgeTop)" />
          <path d="M1 10c2-3 6-5 10-4 3 0 5 3 4 6-1-2-3-2-4-1-4 4-1 10 4 10 3 0 5-1 7-2-3 4-7 5-10 5C5 24-1 18 1 10z" fill="#1670c4" />
        </svg>
      </TaskItem>

      <div className="ml-auto flex items-center pr-2">
        <button type="button" aria-label="显示隐藏的图标">
          <svg viewBox="0 0 12 8" className="h-2 w-3" fill="none" stroke="#fff" strokeWidth="1.400"><path d="m1 7 5-5 5 5" /></svg>
        </button>
        <svg viewBox="0 0 16 14" className="ml-[10px] h-[14px] w-4" fill="none" stroke="#fff" strokeWidth="1.200">
          <path d="M5 2h10.500v8H3V5M8 10v3M5 13h7M.6.6h4v4h-4z" />
        </svg>
        <span className="ml-2 text-sm font-bold">中</span>
        <span className="ml-4 flex h-[15px] w-[14px] items-center justify-center bg-white text-[13px] leading-none text-[#1b2741]">拼</span>
      </div>
    </footer>
  );
}

export default function App() {
  return (
    <div className={"flex h-screen flex-col overflow-hidden bg-[#e6e6e6] " + UI_FONT}>
      <TitleBar />
      <Ribbon />
      <div className="flex min-h-0 flex-1">
        <main className="min-w-0 flex-1 overflow-hidden">
          <Page />
        </main>
        <div className="w-[181px] shrink-0 bg-[#fefefe]" />
        <ScrollBar />
        <aside className="w-[157px] shrink-0 bg-[#e6e6e6] pl-[14px] pt-[13px] text-xl text-[#262626]">帮助</aside>
      </div>
      <StatusBar />
      <TaskBar />
    </div>
  );
}
